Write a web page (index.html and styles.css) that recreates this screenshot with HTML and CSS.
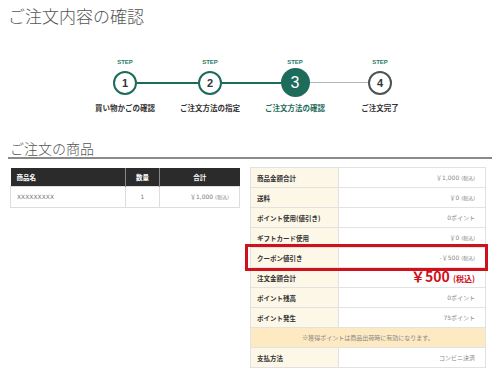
FILE: index.html
```html
<!DOCTYPE html>
<html lang="ja">

<head>
    <meta charset="UTF-8">
    <title>ご注文内容の確認</title>
    <link rel="stylesheet" href="styles.css">
</head>

<body>
    <div class="page">
        <h1 class="page-title">ご注文内容の確認</h1>

        <ol class="steps">
            <li class="step done">
                <span class="step-no">STEP</span>
                <span class="step-mark"><i class="bar off"></i><b class="circle">1</b><i class="bar on"></i></span>
                <span class="step-name">買い物かごの確認</span>
            </li>
            <li class="step done">
                <span class="step-no">STEP</span>
                <span class="step-mark"><i class="bar on"></i><b class="circle">2</b><i class="bar on"></i></span>
                <span class="step-name">ご注文方法の指定</span>
            </li>
            <li class="step current">
                <span class="step-no">STEP</span>
                <span class="step-mark"><i class="bar on"></i><b class="circle">3</b><i class="bar gray"></i></span>
                <span class="step-name">ご注文方法の確認</span>
            </li>
            <li class="step todo">
                <span class="step-no">STEP</span>
                <span class="step-mark"><i class="bar gray"></i><b class="circle">4</b><i class="bar off"></i></span>
                <span class="step-name">ご注文完了</span>
            </li>
        </ol>

        <h2 class="section-title">ご注文の商品</h2>

        <div class="tables">
            <table class="items">
                <thead>
                    <tr>
                        <th class="col-name">商品名</th>
                        <th class="col-qty">数量</th>
                        <th class="col-total">合計</th>
                    </tr>
                </thead>
                <tbody>
                    <tr>
                        <td class="col-name">XXXXXXXXX</td>
                        <td class="col-qty">1</td>
                        <td class="col-total">￥1,000 <small>(税込)</small></td>
                    </tr>
                </tbody>
            </table>

            <table class="summary">
                <tr><th>商品金額合計</th><td>￥1,000 <small>(税込)</small></td></tr>
                <tr><th>送料</th><td>￥0 <small>(税込)</small></td></tr>
                <tr><th>ポイント使用(値引き)</th><td>0ポイント</td></tr>
                <tr><th>ギフトカード使用</th><td>￥0 <small>(税込)</small></td></tr>
                <tr class="coupon"><th>クーポン値引き</th><td>-￥500 <small>(税込)</small></td></tr>
                <tr class="grand"><th>注文金額合計</th><td>￥500 <small>(税込)</small></td></tr>
                <tr><th>ポイント残高</th><td>0ポイント</td></tr>
                <tr><th>ポイント発生</th><td>75ポイント</td></tr>
                <tr class="note"><td colspan="2">※獲得ポイントは商品出荷時に有効になります。</td></tr>
                <tr><th>支払方法</th><td>コンビニ決済</td></tr>
            </table>
        </div>
    </div>
</body>

</html>
```

FILE: styles.css
```css
* {
    margin: 0;
    padding: 0;
    list-style: none;
    box-sizing: border-box;
}

body {
    background: #fff;
    font-family: "Noto Sans CJK JP", "Liberation Sans", sans-serif;
    color: #333;
}

.page {
    width: 500px;
    padding: 0 8px 0 8px;
}

.page-title {
    margin-top: 6px;
    font-size: 17px;
    line-height: 20px;
    font-weight: 300;
    color: #555;
}

/* ステップ */
.steps {
    display: grid;
    grid-template-columns: repeat(4, 85px);
    justify-content: center;
    margin-top: 32px;
    padding-left: 5px;
}

.step {
    display: flex;
    flex-direction: column;
    align-items: center;
}

.step-no {
    font-size: 6px;
    line-height: 8px;
    font-weight: bold;
    color: #2a7a68;
    font-family: "Liberation Sans", sans-serif;
}

.step-mark {
    display: flex;
    align-items: center;
    width: 100%;
    height: 29px;
    margin-top: 2px;
}

.bar {
    flex: 1;
    height: 2px;
}

.bar.on {
    background: #1d6b5a;
}

.bar.gray {
    height: 1px;
    background: #b5b5b5;
}

.circle {
    display: flex;
    align-items: center;
    justify-content: center;
    width: 24px;
    height: 24px;
    border-radius: 50%;
    border: 2px solid #1d6b5a;
    background: #fff;
    font-family: "Liberation Sans", sans-serif;
    font-size: 11px;
    color: #333;
}

.current .circle {
    width: 29px;
    height: 29px;
    border: none;
    background: #1d6b5a;
    color: #fff;
    font-size: 16px;
    font-weight: normal;
}

.todo .circle {
    border-color: #4a5652;
}

.step-name {
    margin-top: 6px;
    font-size: 7.5px;
    line-height: 10px;
    font-weight: bold;
    color: #333;
    white-space: nowrap;
}

.current .step-name {
    color: #1d6b5a;
}

/* 商品 */
.section-title {
    margin-top: 26px;
    padding-left: 2px;
    font-size: 14px;
    line-height: 18px;
    font-weight: 300;
    color: #555;
    border-bottom: 2px solid #8a8a8a;
}

.tables {
    display: flex;
    align-items: flex-start;
    gap: 10px;
    margin-top: 8px;
    padding-left: 2px;
}

table {
    border-collapse: collapse;
    font-size: 6.5px;
}

small {
    font-size: 5px;
    color: #888;
}

.items {
    width: 230px;
    margin-top: 1px;
}

.items th {
    height: 18px;
    background: #2b2b2b;
    color: #fff;
    border-left: 1px solid #888;
    font-weight: bold;
}

.items th:first-child {
    border-left: none;
}

.items td {
    height: 21px;
    border: 1px solid #ddd;
    color: #777;
    font-family: "DejaVu Sans", "Noto Sans CJK JP", sans-serif;
    font-size: 6px;
}

.items .col-name {
    width: 115px;
    padding-left: 6px;
    text-align: left;
}

.items .col-qty {
    width: 34px;
    text-align: center;
}

.items .col-total {
    text-align: center;
}

.items td.col-total {
    text-align: right;
    padding-right: 10px;
}

.summary {
    width: 238px;
}

.summary tr {
    height: 20px;
}

.summary th,
.summary td {
    border: 1px solid #e2e2e2;
}

.summary th {
    width: 88px;
    padding-left: 6px;
    background: #fdf7e8;
    text-align: left;
    font-weight: bold;
    color: #333;
}

.summary td {
    padding-right: 10px;
    text-align: right;
    color: #888;
    font-family: "DejaVu Sans", "Noto Sans CJK JP", sans-serif;
    font-size: 6px;
}

.summary .coupon {
    position: relative;
}

.summary .coupon::after {
    content: "";
    position: absolute;
    top: -4px;
    bottom: -3px;
    left: -6px;
    right: 0;
    border: 3px solid #d0101b;
}

.summary .grand td {
    font-family: "Noto Sans CJK JP", sans-serif;
    font-size: 14px;
    font-weight: bold;
    color: #d0101b;
    line-height: 14px;
}

.summary .grand small {
    font-size: 8px;
    color: #d0101b;
}

.summary .note td {
    background: #fde9c2;
    text-align: center;
    padding: 0;
    font-family: "Noto Sans CJK JP", sans-serif;
}
```
